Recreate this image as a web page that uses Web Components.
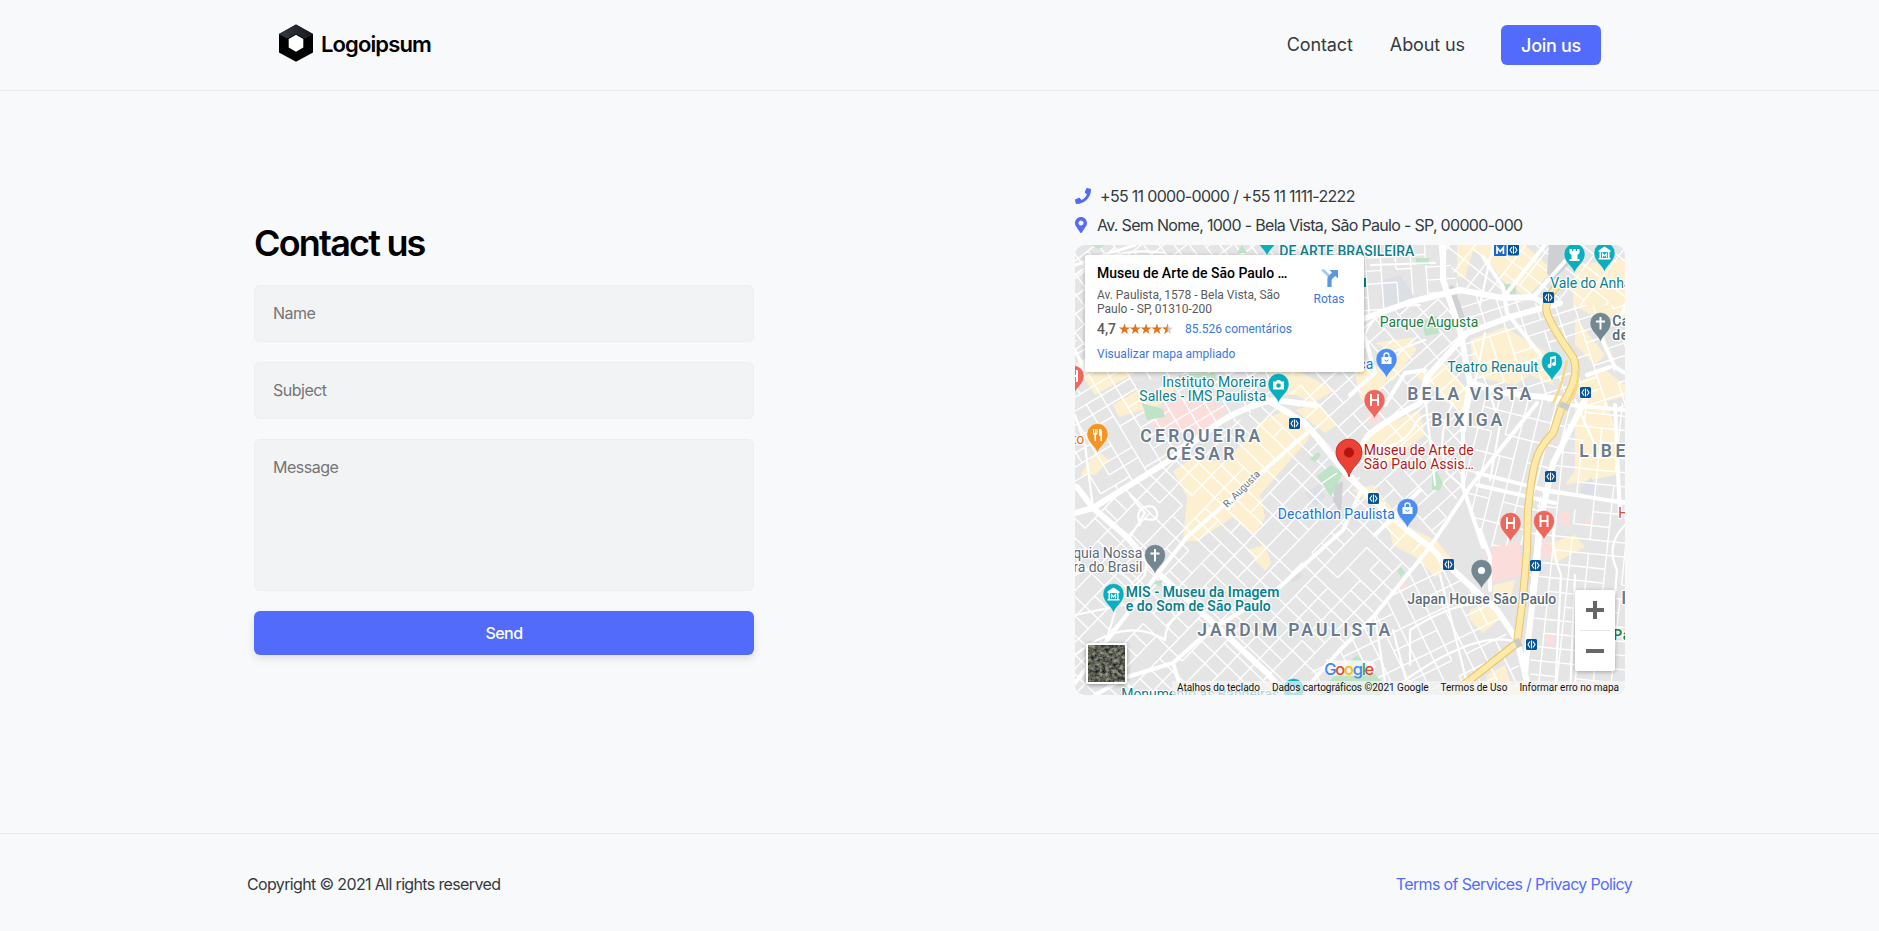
<!DOCTYPE html>
<html lang="en">
<head>
<meta charset="utf-8">
<title>Contact us</title>
<style>
html,body{margin:0;height:100%}
body{background:#f8f9fb;font-family:Inter,"Liberation Sans",sans-serif;color:#343a40}
</style>
</head>
<body>
<contact-page></contact-page>
<script>
const define = (name, html, setup) => customElements.define(name, class extends HTMLElement {
  constructor() {
    super();
    const t = document.createElement('template');
    t.innerHTML = html;
    this.attachShadow({mode: 'open'}).appendChild(t.content.cloneNode(true));
    if (setup) setup(this.shadowRoot, this);
  }
});

define('brand-logo', `
<style>
:host{display:flex;align-items:center;gap:7px;color:#000;font:600 22px/38px Inter,sans-serif;letter-spacing:-.88px}
svg{display:block;flex:none}
span{padding-top:2px}
</style>
<svg width="36" height="38" viewBox="0 0 36 38">
<defs><linearGradient id="g" x1="0" y1=".6" x2="1" y2=".4"><stop offset="0" stop-color="#343a42"/><stop offset="1" stop-color="#15181c"/></linearGradient></defs>
<path d="M18 .5 35 10v18.500L18 37.800 1 28.500V10z" fill="#000"/>
<path d="M18 .5 35 10l-8 4.600L18 9.700l-9 4.900L1 10z" fill="url(#g)"/>
<path d="M18 10.800 25.300 14.900v8.600L18 27.700l-7.300-4.200v-8.600z" fill="#fff"/>
</svg><span>Logoipsum</span>`);

define('site-header', `
<style>
:host{display:flex;box-sizing:border-box;height:91px;border-bottom:1px solid #e9ebee;padding:0 278px;justify-content:space-between;align-items:flex-start;font-size:18px}
brand-logo{margin-top:23px}
nav{display:flex;align-items:center;margin-top:25px;height:40px;line-height:42px;letter-spacing:-.1px}
a{color:#343a40;text-decoration:none}
.c{margin-right:37px}.a{margin-right:36px}
.j{background:#536bfb;color:#fff;border-radius:6px;width:100px;height:40px;text-align:center;font-weight:500;letter-spacing:-.3px}
</style>
<brand-logo></brand-logo><nav><a class="c">Contact</a><a class="a">About us</a><a class="j">Join us</a></nav>`);

define('form-field', `
<style>
:host{display:block;box-sizing:border-box;height:57px;padding:16px 18px;border:1px solid #eceef0;border-radius:6px;background:#f2f3f5;color:#757575;font-size:16px;line-height:22px;letter-spacing:-.5px}
:host([multiline]){height:152px}
</style><slot></slot>`);

define('contact-form', `
<style>
:host{display:flex;flex-direction:column;width:500px;gap:20px}
h1{margin:0;font-size:36px;line-height:44px;font-weight:600;letter-spacing:-1.8px;color:#000}
button{height:44px;border:0;border-radius:6px;background:#536bfb;color:#fff;font:500 16px Inter,sans-serif;letter-spacing:-.5px;box-shadow:0 4px 8px #0000001a;padding:0}
</style>
<h1>Contact us</h1>
<form-field>Name</form-field><form-field>Subject</form-field><form-field multiline>Message</form-field>
<button>Send</button>`);

define('contact-line', `
<style>
:host{display:flex;align-items:center;height:29px;font-size:16px;letter-spacing:-.69px;color:#343a40;white-space:nowrap}
::slotted(svg){display:block;flex:none;fill:#536bfb}
</style><slot></slot>`);

define('place-card', `
<style>
:host{display:flex;box-sizing:border-box;width:279px;height:117px;background:#fff;box-shadow:0 1px 4px #0000004d;padding:10px 12px;font-family:Roboto,sans-serif;font-size:12px;border-radius:2px;white-space:nowrap;justify-content:space-between}
.t{font-size:14px;font-weight:500;color:#000;line-height:16px}
.a{color:#5b5b5b;line-height:14px;margin-top:7px}
.r{display:flex;align-items:center;margin-top:5px;height:16px}
.n{font-weight:500;font-size:14px;color:#5b5b5b;width:22px}
.l{color:#3a78df}.r .l{margin-left:12px}
.v{margin-top:10px;line-height:15px}
.d{width:40px;margin-right:3px;text-align:center;padding-top:4px}
.d svg{display:block;margin:0 auto 5px}
</style>
<div><div class="t">Museu de Arte de São Paulo …</div>
<div class="a">Av. Paulista, 1578 - Bela Vista, São<br>Paulo - SP, 01310-200</div>
<div class="r"><span class="n">4,7</span><svg id="s" width="54" height="12"></svg><span class="l">85.526 comentários</span></div>
<div class="l v">Visualizar mapa ampliado</div></div>
<div class="d"><svg width="20" height="18" viewBox="0 0 20 18"><path d="M2 1 8.500 7.500V18h4V9.500q0-2-1.500-3.500L5 0z" fill="#a9c8ef"/><path d="M8.500 18V10q0-2.500 2-4L13 3.500 10.500 1H19v8.500L16.500 7 14 9q-1.500 1-1.500 3v6z" fill="#5c97e0"/></svg><span class="l">Rotas</span></div>`,
root => {
  const star = 'M5.500 .5 6.900 4.400H11L7.700 6.900 8.900 11 5.500 8.500 2.100 11 3.300 6.900 0 4.400H4.100z';
  let s = '<defs><clipPath id="h"><rect width="5.500" height="12"/></clipPath></defs>';
  for (let i = 0; i < 5; i++) s += `<g transform="translate(${i * 10.800})"><path d="${star}" fill="${i < 4 ? '#e7711b' : '#cfcfcf'}"/>${i == 4 ? `<path d="${star}" fill="#e7711b" clip-path="url(#h)"/>` : ''}</g>`;
  root.getElementById('s').innerHTML = s;
});

define('zoom-control', `
<style>
:host{display:flex;flex-direction:column;width:40px;height:81px;background:#fff;border-radius:2px;box-shadow:0 1px 4px #0000004d}
div{height:40px;display:grid;place-items:center}
hr{width:30px;margin:0 auto;border:0;border-top:1px solid #e6e6e6}
</style>
<div><svg width="18" height="18"><path d="M7 0h4v7h7v4h-7v7H7v-7H0V7h7z" fill="#666"/></svg></div><hr>
<div><svg width="18" height="4"><path d="M0 0h18v4H0z" fill="#666"/></svg></div>`);

define('satellite-toggle', `
<style>:host{display:block;box-sizing:border-box;width:41px;height:41px;border:2px solid #fff;border-radius:2px;box-shadow:0 1px 4px #0006}svg{display:block}</style>
<svg width="37" height="37"><filter id="n" x="0" y="0" width="100%" height="100%" color-interpolation-filters="sRGB"><feTurbulence type="fractalNoise" baseFrequency=".28" numOctaves="4" seed="8"/><feColorMatrix values=".9 0 0 0 -.08  .8 .1 0 0 -.07  .65 0 .15 0 -.06  0 0 0 0 1"/></filter><rect width="37" height="37" filter="url(#n)"/></svg>`);

define('map-attribution', `
<style>:host{display:flex;box-sizing:border-box;height:14px;width:453px;background:#f5f5f5b8;font:10px/14px Roboto,sans-serif;letter-spacing:-.02px;color:#111;padding:0 6px 0 5px;justify-content:space-between;white-space:nowrap}</style>
<span>Atalhos do teclado</span><span>Dados cartográficos ©2021 Google</span><span>Termos de Uso</span><span>Informar erro no mapa</span>`);

define('city-map', `
<style>
:host{display:block;position:relative;width:550px;height:450px;border-radius:10px;overflow:hidden;background:#e5e5e6}
svg.m{display:block}
place-card{position:absolute;left:10px;top:10px}
zoom-control{position:absolute;left:500px;top:345px}
satellite-toggle{position:absolute;left:11px;top:398px}
map-attribution{position:absolute;right:0;bottom:0}
text{font-family:Roboto,sans-serif;paint-order:stroke;stroke:#fffffff0;stroke-width:2.500px;stroke-linejoin:round}
.g{stroke:none}
</style>
<svg class="m" width="550" height="450" viewBox="0 0 550 450">
<g fill="#fcf0d0">
<path d="M184 178 214 163 237 184 232 196 185 250 190 272 180 290 158 272 146 280 122 296 108 296 112 252 98 226 120 212 150 218z"/>
<path d="M38 160 65 144 80 150 92 135 104 140 85 160 44 172z M5 230 22 205 34 215 20 230z M195 127 225 127 260 145 238 158 220 150 200 150z M220 165 244 158 262 180 250 188z"/>
<path d="M390 0H450L478 25 452 52 430 38 412 15z M500 20 550 14V72L520 72 498 60z M500 72 530 110 520 120 500 100z"/>
<path d="M395 95 430 82 450 95 480 112 478 140 455 130 440 140 400 132z M400 0h-18v32h8z M300 98 340 92 332 108 312 104z M305 125 335 98 342 104 318 136z"/>
<path d="M290 190 344 165 350 190 312 218 298 214z M340 130 370 118 395 150 392 168 372 158z"/>
<path d="M500 158 530 150 545 200 540 230 490 240 500 225z M496 140 530 125 550 140V152L510 160z"/>
<path d="M278 245 298 240 330 280 362 296 380 318 360 332 340 312 318 300 310 270z M172 305 190 300 196 318 190 326z M395 365 418 355 424 375 408 388 394 374z M418 340 440 335 436 352 418 350z M412 430 430 420 436 440 450 434V450H410z"/>
<path d="M0 118 28 106 60 128 20 150z M280 128 300 120 318 132 290 160 284 150z M470 300 500 290 510 302 480 318z"/>
</g>
<g fill="#fbdedc"><path d="M74 177 88 160 118 148 152 164 142 180 132 190 84 187z M405 320 420 300 452 296 450 330 412 338z M465 297 475 297 480 310 462 316z M484 268 494 264 495 282 484 278z M505 276 518 275 514 282z M290 170 306 166 302 180 292 178z M470 392 480 388 478 400 470 398z M324 340 335 338 330 346z"/></g>
<g fill="#dcdfe6"><path d="M308 35 325 30 342 55 322 70 305 58z M445 300h15l4 30-12 12z M230 248 246 238 250 252 240 262z M505 245 516 232 522 248 512 256z M212 330 222 323 228 332 216 338z"/></g>
<g id="grid" fill="none" stroke="#fff" stroke-width="1.400"></g>
<g fill="#bfe3c6"><path d="M341 13h13v7h-13z M347 76 362 71 364 88 350 91z M429 39h12v10h-12z M380 56 386 62 380 70z M67 158 88 164 90 172 72 175z M242 231 256 220 268 228 256 252z M235 214 243 207 246 210 240 217z M357 230 362 226 368 238 364 246 357 244z M78 338 88 334 86 342z M322 326 326 322 330 328 326 332z M250 440 282 410 308 438 306 450H245z M16 0h14l-6 4z M162 8 167 0 172 8z M103 130 140 128 142 135 105 135z"/></g>
<path d="M474 0 500 0 495 18 478 36 472 28z M371 43 378 40 390 72 380 76z M260 240 268 236 266 268 258 256z" fill="#cfd0d3"/>
<path d="M246 239 262 228" stroke="#fff" stroke-width="1.500"/>
<g fill="none" stroke="#fff" stroke-linejoin="round" stroke-linecap="round">
<g stroke-width="2.200">
<path d="M60 450 30 400 42 360 70 330 72 310 M0 330Q40 310 62 345 M0 410Q50 370 90 395 M90 395Q90 375 115 362 M0 370 48 360 M0 30Q40 0 90 8 M65 280Q60 265 70 262T82 268 70 274 M18 263 10 200 0 170 M55 292 70 268 55 250 M310 450Q400 380 445 398 M335 420V385Q390 350 420 362 M318 385 335 450 M365 330 395 450 M300 372 312 450 M500 155 520 200 M480 450 486 330 Q474 300 480 275 M500 330 495 450 M550 280Q530 300 542 325L540 350 M310 110 350 95 M290 90Q300 60 345 60 M296 20 360 18 M405 60 418 0 M400 138 410 88 M378 158Q360 190 372 228L388 242 M350 150 360 240 M412 140 425 180 415 235 M300 205Q330 200 340 180T372 178"/>
</g>
<path d="M0 20 35 8 60 0 M10 127 0 105" stroke-width="3"/>
<g stroke-width="4">
<path d="M408 12 428 42 432 68 472 118 M428 53 470 0 M458 52 500 5 M350 125 330 128 310 160 M402 228 470 245 550 258 M402 240 480 258 M495 160 550 165 M520 80 540 122 550 128 M535 80Q550 70 550 60 M540 160 545 270 M512 130 535 122"/>
<path d="M0 438 40 385 78 335 112 292 232 188 M285 248 268 285 198 348 135 385 98 418 52 432 20 450 M98 418 108 450 M395 150 388 185 388 242 408 302 405 285 415 312 415 345 M462 158 395 242 355 302 298 372 265 405 225 450 M345 245 300 290 M290 92 300 128 275 150"/>
</g>
<g stroke-width="6">
<path d="M192 155 230 178 274 232 332 285 355 302 378 325 422 365 442 395 450 428 455 450"/>
<path d="M2 242 18 263 52 292 82 327 135 375 192 428 212 450 M0 268 18 263 95 215 138 182Q160 165 198 155L240 160"/>
<path d="M285 75 335 57 385 45 428 53 458 52 472 60 M276 220 292 192Q300 182 345 158L352 132 392 88 435 72 485 58 M368 0V35L385 85 395 138 388 185 M395 138 430 148 495 155 M510 155 478 218 465 278 462 318 452 405 450 430"/>
</g></g>
<g fill="none" stroke-linejoin="round"><path d="M485 38Q468 55 472 68T498 112Q506 130 488 158L478 188Q464 202 460 218T453 265L452 305 448 352 442 398 395 435 372 452" stroke="#e9c46b" stroke-width="8"/><path d="M485 38Q468 55 472 68T498 112Q506 130 488 158L478 188Q464 202 460 218T453 265L452 305 448 352 442 398 395 435 372 452" stroke="#fde9a8" stroke-width="6"/>
<path d="M492 115Q486 145 478 158 M503 125Q505 145 488 168" stroke="#f5d989" stroke-width="2.500"/><path d="M485 159 494 163 M441 394 445 402" stroke="#c9cacc" stroke-width="6"/></g>
<path d="M289 33h2v9h-2z" fill="#00838f"/>
<g id="labels" transform="translate(-.7 0)"></g><g id="pins"></g>
</svg>
<place-card></place-card><satellite-toggle></satellite-toggle><zoom-control></zoom-control><map-attribution></map-attribution>`,
root => {
  /* minor streets: each district is a clip polygon with its own angle and block size */
  let seed = 7;
  const rnd = () => (seed = (seed * 16807) % 2147483647) / 2147483647;
  const districts = [
    ['0,270 18,263 198,155 232,180 355,302 265,405 212,450 0,450', 44, 18, 14],
    ['0,95 200,120 198,155 18,263 0,240', -31, 17, 12],
    ['205,127 289,127 289,75 385,45 395,138 388,242 355,302 232,180', -42, 20, 14],
    ['289,0 368,0 385,45 289,75', -4, 15, 13],
    ['368,0 550,0 550,60 472,60 385,45', 38, 20, 14],
    ['385,45 472,60 550,60 550,165 395,150', -18, 18, 12],
    ['395,150 500,158 452,300 408,302 388,242', 14, 14, 22],
    ['500,158 550,158 550,450 455,450 455,280', 6, 18, 14],
    ['355,302 422,365 455,450 212,450 298,372', -26, 16, 17],
    ['0,0 289,0 289,12 10,12 10,130 0,130', 52, 14, 12]];
  let g = '';
  districts.forEach(([poly, ang, a, b], i) => {
    let d = '';
    for (let u = -600; u < 600; u += a) for (let v = -600; v < 600; v += b) {
      if (rnd() < .88) d += `M${u} ${v}v${b}`;
      if (rnd() < .78) d += `M${u} ${v}h${a}`;
    }
    g += `<clipPath id="c${i}"><polygon points="${poly}"/></clipPath><g clip-path="url(#c${i})"><path transform="translate(275 225) rotate(${ang})" d="${d}"/></g>`;
  });
  root.getElementById('grid').innerHTML = g;

  const teal = '#0a818d', slate = '#6a7b8e', grey = '#5b6b78', red = '#b3181a', blue = '#2374dc', green = '#1a8043';
  /* text, x, baseline, width, size, colour, weight */
  const labels = [
    ['DE ARTE BRASILEIRA', 205, 11, 135, 14, teal, 500], ['Vale do Anhangabaú', 476, 43, 127, 14, teal, 400],
    ['Parque Augusta', 305.5, 82, 98.5, 14, green, 400], ['Teatro Renault', 373, 127, 91, 14, teal, 400],
    ['Ca', 538, 81, 17, 14, grey, 600], ['de', 538, 95, 16, 14, grey, 600], ['ca', 284, 124, 15, 14, blue, 400],
    ['BELA VISTA', 333, 155, 124, 17.5, slate, 600], ['BIXIGA', 357, 181, 71, 17.5, slate, 600], ['LIBE', 505, 212, 46, 17.5, slate, 600],
    ['Museu de Arte de', 289.5, 210, 110, 14, red, 400], ['São Paulo Assis…', 289.5, 224, 110, 14, red, 400],
    ['Decathlon Paulista', 203.5, 274, 117, 14, blue, 400],
    ['Instituto Moreira', 88, 142, 104, 14, teal, 400], ['Salles - IMS Paulista', 65, 156, 127, 14, teal, 400],
    ['CERQUEIRA', 66, 197, 120, 17.5, slate, 600], ['CÉSAR', 92, 215, 68, 17.5, slate, 600],
    ['to', -2, 199, 12, 14, '#d8731c', 400], ['quia Nossa', -1, 313, 69, 14, grey, 400], ['ra do Brasil', -1, 327, 69, 14, grey, 400],
    ['MIS - Museu da Imagem', 51.5, 352, 153.5, 14, teal, 600], ['e do Som de São Paulo', 51.5, 366, 145, 14, teal, 600],
    ['JARDIM PAULISTA', 123, 391, 193, 17.5, slate, 600], ['Japan House São Paulo', 333, 359, 149, 14, grey, 500],
    ['Monumento às Bandeiras', 47, 454, 158, 14, teal, 400], ['Pa', 539, 395, 17, 14, green, 600], ['LI', 530, 359, 22, 17.5, slate, 600],
    ['H', 544, 273, 9, 14, '#d9453e', 400]];
  root.getElementById('labels').innerHTML = labels.map(([t, x, y, w, s, c, k]) =>
    `<text x="${x}" y="${y}" textLength="${w}" font-size="${s}" fill="${c}" font-weight="${k}">${t}</text>`).join('')
    + `<text transform="translate(153 263) rotate(-45)" textLength="47" font-size="10" fill="#666e77">R. Augusta</text>`
    + `<path d="M257 423H294" stroke="#ffffffb0" stroke-width="15" stroke-linecap="round"/><text class="g" x="250" y="430" textLength="50" font-size="16.500" font-weight="500" style="font-family:Inter,sans-serif"><tspan fill="#4285f4">G</tspan><tspan fill="#ea4335">o</tspan><tspan fill="#fbbc05">o</tspan><tspan fill="#4285f4">g</tspan><tspan fill="#34a853">l</tspan><tspan fill="#ea4335">e</tspan></text>`;

  const glyph = {
    castle: '<path d="M-5-24h2.500v2h1.300v-2h2.400v2h1.300v-2H5v4L3-18v4h2v2H-5v-2h2v-4L-5-20z" fill="#fff"/>',
    museum: '<path d="M0-25.500 6-21.500v1.500H-6v-1.500z M-5-20h1.500v6.500H-5z M3.500-20H5v6.500H3.500z M-6-14H6v1.500H-6z" fill="#fff"/><path d="M-2-14.500v-4L0-16.200l2-2.300v4" fill="none" stroke="#fff" stroke-width="1.200"/>',
    cross: '<path d="M-1-25h2v3.500h3.500v2H1v7h-2v-7h-3.500v-2H-1z" fill="#fff"/>',
    music: '<path d="M-2-24 4-25v8a2 2 0 1 1-1.500-2v-3.500L-.5-22v7a2 2 0 1 1-1.500-2z" fill="#fff"/>',
    shop: '<path d="M-5-21H5v7H-5z" fill="#fff"/><path d="M-2.500-21v-1.500a2.500 2.500 0 0 1 5 0V-21" fill="none" stroke="#fff" stroke-width="1.300"/><path d="M-2-18q2 2.500 4 0" fill="none" stroke="#4b8df0"/>',
    h: '<path d="M-4.500-25h2v5h5v-5h2v12h-2v-5h-5v5h-2z" fill="#fff"/>',
    food: '<path d="M-4.500-24v4q0 2 1.500 2v6h1.500v-6q1.500 0 1.500-2v-4h-1v4h-.8v-4h-.8v4h-.8v-4z M1.500-24q3-1 3 3v9H3v-5H1.500z" fill="#fff"/>',
    camera: '<path d="M-5.500-21.500h3l1-1.500h3l1 1.500h3v8h-11z" fill="#fff"/><circle cy="-17.500" r="2.300" fill="#0aafbf"/>',
    dot: '<circle cy="-18.500" r="3.600" fill="#fff"/>', none: ''};
  const T = '#0aafbf', R = '#ee675c', B = '#4b8df0', G = '#738791';
  const pins = [[499,28,T,'castle'],[529,27,T,'museum'],[525,97,G,'cross'],[476.5,136,T,'music'],[311,133,B,'shop'],[299,174,R,'h'],[435,297,R,'h'],[468.5,295,R,'h'],[332,283,B,'shop'],[203,158,T,'camera'],[22,208,'#f29523','food'],[-2,150,R,'h'],[79.5,329,G,'cross'],[38,368,T,'museum'],[406,344,G,'dot'],[218,463,T,'dot'],[191.5,11,T,'none']];
  let p = pins.map(([x, y, c, k]) => `<g transform="translate(${x + .5} ${y})"><path d="M0 0C-2-7-10.500-10.500-10.500-19A10.500 10.500 0 0 1 10.500-19C10.500-10.500 2-7 0 0Z" fill="${c}" stroke="#ffffffb0" stroke-width=".6"/>${glyph[k]}</g>`).join('');
  p += '<g transform="translate(274 232)"><path d="M0 0C-2-10-13-14-13-25A13 13 0 0 1 13-25C13-14 2-10 0 0Z" fill="#ea4335" stroke="#c5221f" stroke-width=".8"/><circle cy="-24.500" r="5" fill="#b31412"/></g>';
  for (const [x, y] of [[438.5,5],[473.5,52.5],[510.5,147.5],[219.500,178.500],[475.5,231.5],[298.5,253.5],[373.5,319.500],[460.5,320.5],[456.5,399.5]])
    p += `<g transform="translate(${x} ${y})"><rect x="-5.500" y="-5.500" width="11" height="11" rx="1.500" fill="#07539b"/><path d="M0-4V4M-1.500-3-3.500 0l2 3M1.500-3 3.500 0l-2 3" fill="none" stroke="#fff" stroke-width="1.100"/></g>`;
  p += '<rect x="419" y="-1" width="12.500" height="12" rx="1" fill="#1967d2"/><path d="M422 9V2.500L425.200 6.500l3.200-4V9" fill="none" stroke="#fff" stroke-width="1.700"/>';
  root.getElementById('pins').innerHTML = p;
});

define('site-footer', `
<style>:host{display:flex;box-sizing:border-box;height:98px;border-top:1px solid #e9ebee;padding:0 247px;justify-content:space-between;font-size:16px;line-height:100px;letter-spacing:-.64px}a{color:#536bfb}</style>
<span>Copyright © 2021 All rights reserved</span><a>Terms of Services / Privacy Policy</a>`);

define('contact-page', `
<style>
:host{display:flex;flex-direction:column;height:931px}
main{flex:1;display:flex;justify-content:space-between;align-items:flex-start;padding:0 254px}
contact-form{margin-top:130px}
section{margin-top:90px}
city-map{margin-top:6px}
.p svg{margin-right:9px}.q svg{margin-right:10px}
</style>
<site-header></site-header>
<main><contact-form></contact-form>
<section>
<contact-line class="p"><svg width="16" height="16" viewBox="0 0 512 512"><path d="M493.400 24.600l-104-24c-11.300-2.600-22.900 3.300-27.500 13.900l-48 112c-4.200 9.800-1.400 21.300 6.900 28l60.600 49.600c-36 76.700-98.900 140.500-177.200 177.200l-49.600-60.600c-6.800-8.300-18.200-11.100-28-6.900l-112 48C3.900 366.500-2 378.100.6 389.400l24 104C27.100 504.200 36.700 512 48 512c256.100 0 464-207.500 464-464 0-11.200-7.700-20.900-18.600-23.400z"/></svg>+55 11 0000-0000 / +55 11 1111-2222</contact-line>
<contact-line class="q"><svg width="12" height="16" viewBox="0 0 384 512"><path d="M172.300 501.700C27 291 0 269.400 0 192 0 86 86 0 192 0s192 86 192 192c0 77.400-27 99-172.300 309.700-9.500 13.800-29.900 13.800-39.500 0zM192 272c44.200 0 80-35.800 80-80s-35.800-80-80-80-80 35.800-80 80 35.800 80 80 80z"/></svg>Av. Sem Nome, 1000 - Bela Vista, São Paulo - SP, 00000-000</contact-line>
<city-map></city-map>
</section></main>
<site-footer></site-footer>`);
</script>
</body>
</html>
